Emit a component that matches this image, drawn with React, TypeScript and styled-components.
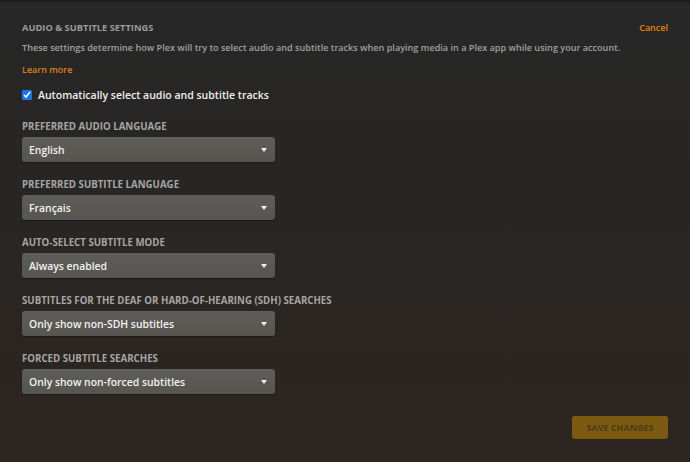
import styled, { createGlobalStyle } from "styled-components";

const GlobalStyle = createGlobalStyle`
  html, body {
    margin: 0;
    padding: 0;
    height: 100%;
  }
  body {
    font-family: "Open Sans", "Liberation Sans", sans-serif;
    background: #262626;
  }
`;

interface Field {
  label: string;
  value: string;
}

const fields: Field[] = [
  { label: "Preferred audio language", value: "English" },
  { label: "Preferred subtitle language", value: "Français" },
  { label: "Auto-select subtitle mode", value: "Always enabled" },
  {
    label: "Subtitles for the deaf or hard-of-hearing (SDH) searches",
    value: "Only show non-SDH subtitles",
  },
  { label: "Forced subtitle searches", value: "Only show non-forced subtitles" },
];

export default function App() {
  return (
    <>
      <GlobalStyle />
      <Page>
        <Header>
          <Title>Audio &amp; Subtitle Settings</Title>
          <Cancel href="#">Cancel</Cancel>
        </Header>
        <Description>
          These settings determine how Plex will try to select audio and subtitle
          tracks when playing media in a Plex app while using your account.
        </Description>
        <LearnMore href="#">Learn more</LearnMore>
        <CheckRow>
          <Checkbox type="checkbox" defaultChecked />
          <CheckText>Automatically select audio and subtitle tracks</CheckText>
        </CheckRow>
        <Fields>
          {fields.map((f) => (
            <Group key={f.label}>
              <Label>{f.label}</Label>
              <Select>
                <span>{f.value}</span>
                <Caret />
              </Select>
            </Group>
          ))}
        </Fields>
        <Footer>
          <SaveButton>Save Changes</SaveButton>
        </Footer>
      </Page>
    </>
  );
}

const Page = styled.div`
  box-sizing: border-box;
  width: 690px;
  height: 462px;
  padding: 17px 22px 0 22px;
  border-top: 2px solid #1c1c1c;
  background: linear-gradient(180deg, #272727 0%, #282624 45%, #2d2520 100%);
  display: flex;
  flex-direction: column;
`;

const Header = styled.div`
  display: flex;
  justify-content: space-between;
  align-items: center;
  height: 16px;
`;

const Title = styled.h1`
  margin: 0;
  font-size: 9.3px;
  font-weight: 700;
  text-transform: uppercase;
  color: #9a9a9a;
`;

const Cancel = styled.a`
  font-size: 9px;
  font-weight: 600;
  color: #e5820d;
  text-decoration: none;
`;

const Description = styled.p`
  margin: 6px 0 0 0;
  font-size: 9.1px;
  font-weight: 600;
  line-height: 13px;
  color: #a0a0a0;
`;

const LearnMore = styled.a`
  margin-top: 9px;
  font-size: 9px;
  font-weight: 600;
  line-height: 13px;
  color: #d9811a;
  text-decoration: none;
`;

const CheckRow = styled.label`
  display: flex;
  align-items: center;
  gap: 6px;
  margin-top: 12px;
`;

const Checkbox = styled.input`
  margin: 0;
  width: 10px;
  height: 10px;
  accent-color: #1a73e8;
`;

const CheckText = styled.span`
  font-size: 10.5px;
  font-weight: 600;
  line-height: 14px;
  color: #eeeeee;
`;

const Fields = styled.div`
  display: flex;
  flex-direction: column;
  gap: 16px;
  margin-top: 18px;
`;

const Group = styled.div`
  display: flex;
  flex-direction: column;
  gap: 4px;
`;

const Label = styled.div`
  font-size: 9.7px;
  font-weight: 700;
  line-height: 13px;
  text-transform: uppercase;
  color: #a5a5a5;
`;

const Select = styled.div`
  box-sizing: border-box;
  width: 253px;
  height: 25px;
  padding: 0 8px 0 7px;
  display: flex;
  align-items: center;
  justify-content: space-between;
  border-radius: 3px;
  background: linear-gradient(180deg, #5f5d5a 0%, #57554f 100%);
  box-shadow: 0 1px 1px rgba(0, 0, 0, 0.35);
  font-size: 10.4px;
  font-weight: 600;
  color: #f2f2f2;
`;

const Caret = styled.i`
  width: 0;
  height: 0;
  border-left: 3.5px solid transparent;
  border-right: 3.5px solid transparent;
  border-top: 4px solid #f2f2f2;
`;

const Footer = styled.div`
  display: flex;
  justify-content: flex-end;
  margin-top: 22px;
`;

const SaveButton = styled.button`
  width: 96px;
  height: 23px;
  border: none;
  border-radius: 3px;
  background: #7c5a12;
  font-family: "Open Sans", "Liberation Sans", sans-serif;
  font-size: 9px;
  font-weight: 700;
  text-transform: uppercase;
  color: #4c3a12;
`;
